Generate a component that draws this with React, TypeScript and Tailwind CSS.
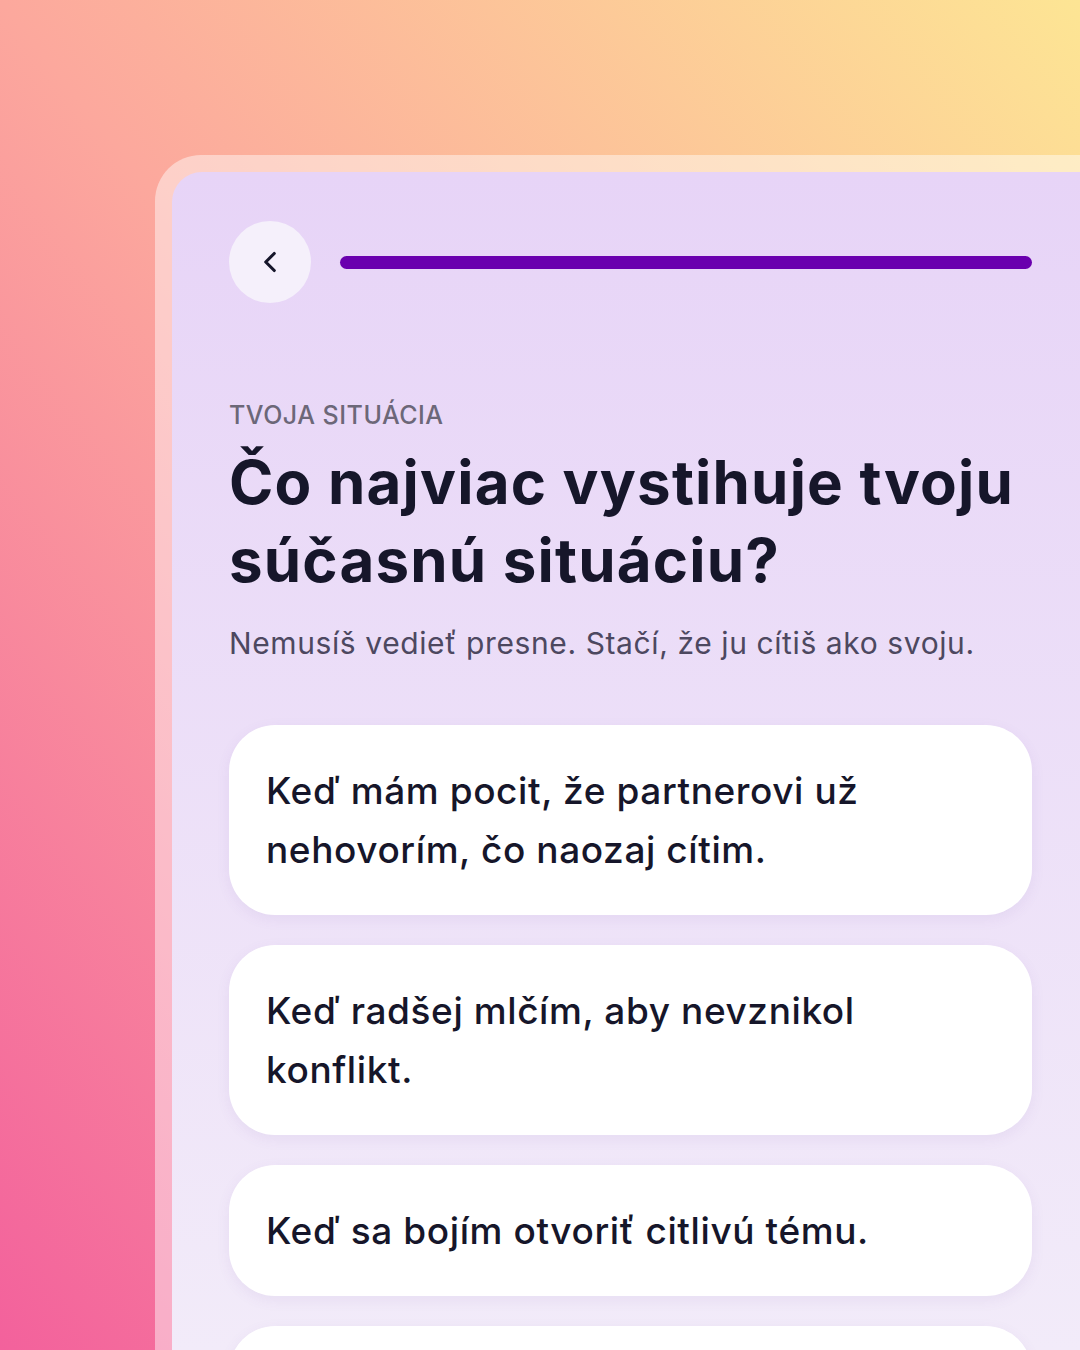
import React from "react";
import { ChevronLeft } from "lucide-react";

const options = [
  "Keď mám pocit, že partnerovi už nehovorím, čo naozaj cítim.",
  "Keď radšej mlčím, aby nevznikol konflikt.",
  "Keď sa bojím otvoriť citlivú tému.",
  "Keď neviem, ako začať rozhovor.",
];

export default function App() {
  return (
    <div
      className="w-[1080px] h-[1350px] overflow-hidden bg-[linear-gradient(to_top_right,#f3619c_0%,#fca89d_50%,#fde594_100%)] pl-[155px] pt-[155px]"
      style={{ fontFamily: "Inter, 'Noto Sans', sans-serif" }}
    >
      <div className="h-full rounded-tl-[46px] bg-white/45 pl-[17px] pt-[17px]">
        <div className="h-full rounded-tl-[30px] bg-[linear-gradient(to_bottom,#e7d4f7,#f2ebf9)] pl-[57px] pr-[48px] pt-[49px]">
          <div className="flex items-center">
            <button className="flex h-[82px] w-[82px] shrink-0 items-center justify-center rounded-full bg-[#f5f0fb]">
              <ChevronLeft className="h-[34px] w-[34px] text-[#16162a]" strokeWidth={2.2} />
            </button>
            <div className="ml-[29px] h-[13px] flex-1 rounded-full bg-[#6a00ae]" />
          </div>

          <div className="mt-[96px] text-[25px] font-medium leading-[32px] tracking-[0.02em] text-[#6c6778]">
            TVOJA SITUÁCIA
          </div>
          <h1 className="mt-[12px] text-[60px] font-bold leading-[78px] tracking-[0.02em] text-[#16162a]">
            Čo najviac vystihuje tvoju súčasnú situáciu?
          </h1>
          <p className="mt-[24px] text-[30px] font-normal leading-[40px] tracking-[0.02em] text-[#4d4860]">
            Nemusíš vedieť presne. Stačí, že ju cítiš ako svoju.
          </p>

          <div className="mt-[62px] flex flex-col gap-[30px]">
            {options.map((o) => (
              <div
                key={o}
                className="rounded-[46px] bg-white py-[36px] pl-[37px] pr-[120px] text-[37px] font-medium leading-[59px] tracking-[0.016em] text-[#16162a] shadow-[0_4px_14px_rgba(120,80,160,0.08)]"
              >
                {o}
              </div>
            ))}
          </div>
        </div>
      </div>
    </div>
  );
}
